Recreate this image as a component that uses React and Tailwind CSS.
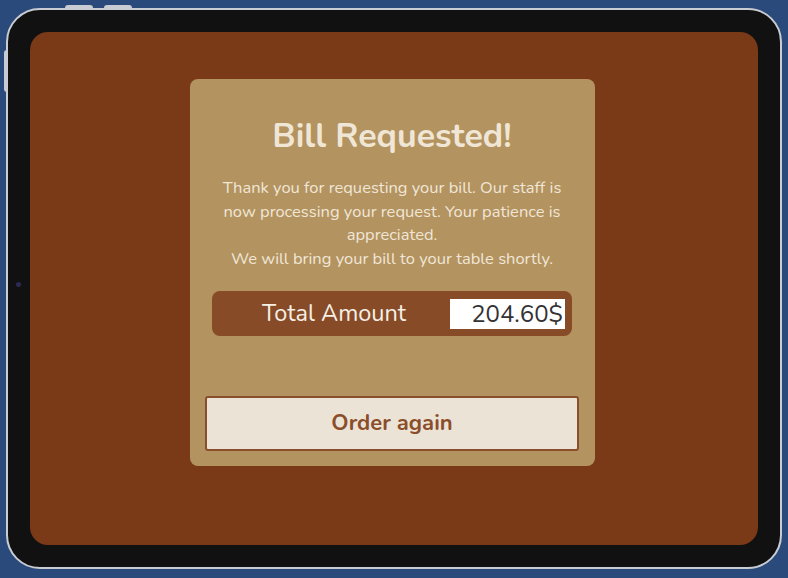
import React from 'react';

const font = { fontFamily: 'Nunito, Lato, "Open Sans", sans-serif' };

export default function App() {
  return (
    <div className="w-[788px] h-[578px] bg-[#2a4a7b] p-[6px] pt-[8px] pb-[9px] overflow-hidden" style={font}>
      {/* Device */}
      <div className="relative h-full w-[776px] rounded-[34px] border-2 border-[#c9ccd2] bg-[#111111] p-[22px]">
        {/* top buttons */}
        <div className="absolute -top-[5px] left-[57px] h-[3px] w-[28px] rounded-t-sm bg-[#c9ccd2]" />
        <div className="absolute -top-[5px] left-[96px] h-[3px] w-[28px] rounded-t-sm bg-[#c9ccd2]" />
        {/* side button */}
        <div className="absolute -left-[4px] top-[40px] h-[42px] w-[3px] rounded-l-sm bg-[#c9ccd2]" />
        {/* camera */}
        <div className="absolute left-[8px] top-[272px] h-[5px] w-[5px] rounded-full bg-[#2b2a55]" />

        <div className="flex h-full w-full justify-center rounded-[18px] bg-[#7a3a18] pr-[4px] pt-[47px]">
          <div className="flex h-[387px] w-[405px] flex-col items-center rounded-[8px] bg-[#b39360] px-[15px] pt-[36px]">
            <h1 className="text-[34px] font-bold leading-[42px] text-[#f0e6d6]">Bill Requested!</h1>
            <p className="mt-[19px] w-[356px] text-center text-[16.5px] leading-[23.5px] text-[#f0e6d6]">
              Thank you for requesting your bill. Our staff is now processing your request. Your patience is appreciated.
              <br />
              We will bring your bill to your table shortly.
            </p>
            <div className="mt-[21px] flex h-[45px] w-[360px] items-center justify-between rounded-[8px] bg-[#874b27] pl-[50px] pr-[7px]">
              <span className="text-[23.5px] text-[#f5efe6]">Total Amount</span>
              <div className="flex h-[30px] w-[115px] items-center justify-end bg-white pr-[2px] text-[24px] text-[#333333]">
                204.60$
              </div>
            </div>
            <button className="mt-[60px] flex h-[55px] w-[374px] items-center justify-center rounded-[3px] border-2 border-[#8a4e2a] bg-[#ece3d7] text-[22px] font-bold text-[#8a4e2a]">
              Order again
            </button>
          </div>
        </div>
      </div>
    </div>
  );
}
